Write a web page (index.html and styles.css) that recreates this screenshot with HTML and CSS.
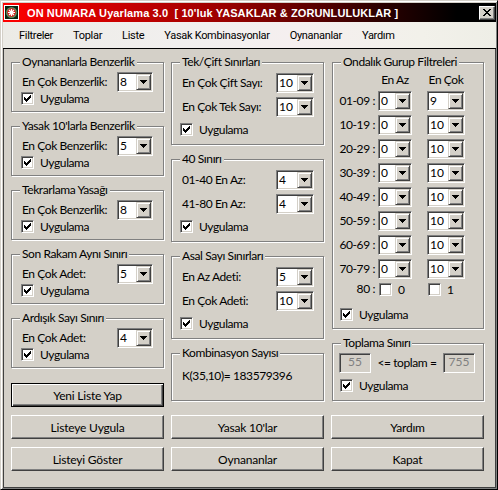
FILE: index.html
```html
<!DOCTYPE html>
<html lang="tr">
<head>
<meta charset="utf-8">
<title>ON NUMARA Uyarlama 3.0</title>
<link rel="stylesheet" href="styles.css">
</head>
<body>
<svg class="defs" width="0" height="0" aria-hidden="true">
  <symbol id="tick" viewBox="0 0 7 7">
    <path d="M0 2h1v3H0zM1 3h1v3H1zM2 4h1v3H2zM3 3h1v3H3zM4 2h1v3H4zM5 1h1v3H5zM6 0h1v3H6z"/>
  </symbol>
  <symbol id="arrow" viewBox="0 0 7 4">
    <path d="M0 0h7v1H0zM1 1h5v1H1zM2 2h3v1H2zM3 3h1v1H3z"/>
  </symbol>
</svg>

<div class="window">
  <header class="titlebar">
    <svg class="app-icon" viewBox="0 0 15 15" aria-hidden="true">
      <rect x="0.5" y="0.5" width="14" height="14" fill="#0b2410" stroke="#fff"/>
      <circle cx="7.5" cy="7.5" r="5.5" fill="#5f8f63"/>
      <circle cx="7.5" cy="7.5" r="4.2" fill="#d81818"/>
      <path d="M7.5 4v7M4 7.5h7M5 5l5 5M10 5l-5 5" stroke="#fff" stroke-width="1.2"/>
    </svg>
    <span class="title">ON NUMARA Uyarlama 3.0&nbsp; [ 10'luk YASAKLAR &amp; ZORUNLULUKLAR ]</span>
    <span class="close">
      <svg viewBox="0 0 8 7" aria-hidden="true"><path d="M0 0h2v1H0zM6 0h2v1H6zM1 1h2v1H1zM5 1h2v1H5zM2 2h4v1H2zM3 3h2v1H3zM2 4h4v1H2zM1 5h2v1H1zM5 5h2v1H5zM0 6h2v1H0zM6 6h2v1H6z"/></svg>
    </span>
  </header>

  <nav class="menubar">
    <span>Filtreler</span>
    <span>Toplar</span>
    <span>Liste</span>
    <span>Yasak Kombinasyonlar</span>
    <span>Oynananlar</span>
    <span>Yardım</span>
  </nav>

  <main class="client">
    <!-- left column -->
    <div class="col">
      <section class="group compact">
        <span class="caption">Oynananlarla Benzerlik</span>
        <div class="field"><span class="lbl">En Çok Benzerlik:</span>
          <span class="combo w36"><span class="val">8</span><span class="drop"><svg><use href="#arrow"/></svg></span></span></div>
        <div class="check"><span class="box"><svg><use href="#tick"/></svg></span>Uygulama</div>
      </section>
      <section class="group compact">
        <span class="caption">Yasak 10'larla Benzerlik</span>
        <div class="field"><span class="lbl">En Çok Benzerlik:</span>
          <span class="combo w36"><span class="val">5</span><span class="drop"><svg><use href="#arrow"/></svg></span></span></div>
        <div class="check"><span class="box"><svg><use href="#tick"/></svg></span>Uygulama</div>
      </section>
      <section class="group compact">
        <span class="caption">Tekrarlama Yasağı</span>
        <div class="field"><span class="lbl">En Çok Benzerlik:</span>
          <span class="combo w36"><span class="val">8</span><span class="drop"><svg><use href="#arrow"/></svg></span></span></div>
        <div class="check"><span class="box"><svg><use href="#tick"/></svg></span>Uygulama</div>
      </section>
      <section class="group compact">
        <span class="caption">Son Rakam Aynı Sınırı</span>
        <div class="field"><span class="lbl">En Çok Adet:</span>
          <span class="combo w36"><span class="val">5</span><span class="drop"><svg><use href="#arrow"/></svg></span></span></div>
        <div class="check"><span class="box"><svg><use href="#tick"/></svg></span>Uygulama</div>
      </section>
      <section class="group compact">
        <span class="caption">Ardışık Sayı Sınırı</span>
        <div class="field"><span class="lbl">En Çok Adet:</span>
          <span class="combo w36"><span class="val">4</span><span class="drop"><svg><use href="#arrow"/></svg></span></span></div>
        <div class="check"><span class="box"><svg><use href="#tick"/></svg></span>Uygulama</div>
      </section>
      <button class="btn default new-list" type="button">Yeni Liste Yap</button>
    </div>

    <!-- middle column -->
    <div class="col">
      <section class="group pair">
        <span class="caption">Tek/Çift Sınırları</span>
        <div class="field"><span class="lbl">En Çok Çift Sayı:</span>
          <span class="combo w38"><span class="val">10</span><span class="drop"><svg><use href="#arrow"/></svg></span></span></div>
        <div class="field"><span class="lbl">En Çok Tek Sayı:</span>
          <span class="combo w38"><span class="val">10</span><span class="drop"><svg><use href="#arrow"/></svg></span></span></div>
        <div class="check"><span class="box"><svg><use href="#tick"/></svg></span>Uygulama</div>
      </section>
      <section class="group pair">
        <span class="caption">40 Sınırı</span>
        <div class="field"><span class="lbl">01-40 En Az:</span>
          <span class="combo w38"><span class="val">4</span><span class="drop"><svg><use href="#arrow"/></svg></span></span></div>
        <div class="field"><span class="lbl">41-80 En Az:</span>
          <span class="combo w38"><span class="val">4</span><span class="drop"><svg><use href="#arrow"/></svg></span></span></div>
        <div class="check"><span class="box"><svg><use href="#tick"/></svg></span>Uygulama</div>
      </section>
      <section class="group pair">
        <span class="caption">Asal Sayı Sınırları</span>
        <div class="field"><span class="lbl">En Az Adeti:</span>
          <span class="combo w38"><span class="val">5</span><span class="drop"><svg><use href="#arrow"/></svg></span></span></div>
        <div class="field"><span class="lbl">En Çok Adeti:</span>
          <span class="combo w38"><span class="val">10</span><span class="drop"><svg><use href="#arrow"/></svg></span></span></div>
        <div class="check"><span class="box"><svg><use href="#tick"/></svg></span>Uygulama</div>
      </section>
      <section class="group combos">
        <span class="caption">Kombinasyon Sayısı</span>
        <div class="count">K(35,10)= 183579396</div>
      </section>
    </div>

    <!-- right column -->
    <div class="col">
      <section class="group decades">
        <span class="caption">Ondalık Gurup Filtreleri</span>
        <div class="dhead"><span class="c1">En Az</span><span class="c2">En Çok</span></div>
        <div class="drow"><span class="dl">01-09 :</span>
          <span class="combo w34 c1"><span class="val">0</span><span class="drop"><svg><use href="#arrow"/></svg></span></span>
          <span class="combo w38 c2"><span class="val">9</span><span class="drop"><svg><use href="#arrow"/></svg></span></span></div>
        <div class="drow"><span class="dl">10-19 :</span>
          <span class="combo w34 c1"><span class="val">0</span><span class="drop"><svg><use href="#arrow"/></svg></span></span>
          <span class="combo w38 c2"><span class="val">10</span><span class="drop"><svg><use href="#arrow"/></svg></span></span></div>
        <div class="drow"><span class="dl">20-29 :</span>
          <span class="combo w34 c1"><span class="val">0</span><span class="drop"><svg><use href="#arrow"/></svg></span></span>
          <span class="combo w38 c2"><span class="val">10</span><span class="drop"><svg><use href="#arrow"/></svg></span></span></div>
        <div class="drow"><span class="dl">30-39 :</span>
          <span class="combo w34 c1"><span class="val">0</span><span class="drop"><svg><use href="#arrow"/></svg></span></span>
          <span class="combo w38 c2"><span class="val">10</span><span class="drop"><svg><use href="#arrow"/></svg></span></span></div>
        <div class="drow"><span class="dl">40-49 :</span>
          <span class="combo w34 c1"><span class="val">0</span><span class="drop"><svg><use href="#arrow"/></svg></span></span>
          <span class="combo w38 c2"><span class="val">10</span><span class="drop"><svg><use href="#arrow"/></svg></span></span></div>
        <div class="drow"><span class="dl">50-59 :</span>
          <span class="combo w34 c1"><span class="val">0</span><span class="drop"><svg><use href="#arrow"/></svg></span></span>
          <span class="combo w38 c2"><span class="val">10</span><span class="drop"><svg><use href="#arrow"/></svg></span></span></div>
        <div class="drow"><span class="dl">60-69 :</span>
          <span class="combo w34 c1"><span class="val">0</span><span class="drop"><svg><use href="#arrow"/></svg></span></span>
          <span class="combo w38 c2"><span class="val">10</span><span class="drop"><svg><use href="#arrow"/></svg></span></span></div>
        <div class="drow"><span class="dl">70-79 :</span>
          <span class="combo w34 c1"><span class="val">0</span><span class="drop"><svg><use href="#arrow"/></svg></span></span>
          <span class="combo w38 c2"><span class="val">10</span><span class="drop"><svg><use href="#arrow"/></svg></span></span></div>
        <div class="drow last"><span class="dl">80 :</span>
          <span class="opt c1"><span class="box"></span>0</span>
          <span class="opt c2"><span class="box"></span>1</span></div>
        <div class="check"><span class="box"><svg><use href="#tick"/></svg></span>Uygulama</div>
      </section>
      <section class="group sum">
        <span class="caption">Toplama Sınırı</span>
        <div class="sumrow"><span class="edit">55</span><span>&lt;= toplam =</span><span class="edit">755</span></div>
        <div class="check"><span class="box"><svg><use href="#tick"/></svg></span>Uygulama</div>
      </section>
    </div>

    <button class="btn" type="button">Listeye Uygula</button>
    <button class="btn" type="button">Yasak 10'lar</button>
    <button class="btn" type="button">Yardım</button>
    <button class="btn" type="button">Listeyi Göster</button>
    <button class="btn" type="button">Oynananlar</button>
    <button class="btn" type="button">Kapat</button>
  </main>
</div>
</body>
</html>
```

FILE: styles.css
```css
* { box-sizing: border-box; }

html, body { margin: 0; padding: 0; }

body {
  width: 498px;
  height: 490px;
  overflow: hidden;
  background: #d4d0c8;
  color: #000;
  font-family: Lato, "Liberation Sans", sans-serif;
  font-size: 12px;
  letter-spacing: -0.4px;
}

.defs { position: absolute; width: 0; height: 0; overflow: hidden; }

svg { fill: currentColor; shape-rendering: crispEdges; }

/* window frame */
.window {
  width: 498px;
  height: 490px;
  display: flex;
  flex-direction: column;
  padding: 2px 1px 1px 2px;
  background: #d4d0c8;
  border: 1px solid;
  border-color: #d4d0c8 #000 #000 #d4d0c8;
  box-shadow: inset 1px 1px 0 #fff, inset -1px -1px 0 #808080;
}

/* caption bar */
.titlebar {
  flex: none;
  height: 19px;
  display: flex;
  align-items: center;
  color: #fff;
  background: linear-gradient(to right, #ff0000 0%, #9a0000 45%, #300000 75%, #000 92%);
}

.app-icon {
  width: 15px;
  height: 15px;
  margin-left: 1px;
  flex: none;
  shape-rendering: auto;
}

.title {
  flex: 1;
  margin-left: 8px;
  font: bold 11px "Liberation Sans", Arial, sans-serif;
  letter-spacing: 0.1px;
  white-space: pre;
}

.close {
  flex: none;
  width: 16px;
  height: 14px;
  margin-right: 1px;
  display: flex;
  align-items: center;
  justify-content: center;
  color: #000;
  background: #d4d0c8;
  border: 1px solid;
  border-color: #fff #404040 #404040 #fff;
  box-shadow: inset -1px -1px 0 #808080;
}

.close svg { width: 8px; height: 7px; }

/* menu */
.menubar {
  flex: none;
  height: 27px;
  display: flex;
  align-items: center;
  padding-left: 6px;
  background: linear-gradient(to right, #ecebe6 0%, #f1efee 35%, #f5efef 60%, #f2f1ea 85%, #eeeee6 100%);
  border-bottom: 1px solid #000;
  font: 11px Roboto, "Liberation Sans", sans-serif;
  letter-spacing: -0.3px;
}

.menubar span { padding: 0 10px; }

/* dialog body */
.client {
  flex: 1;
  display: grid;
  grid-template-columns: repeat(3, 153px);
  column-gap: 7px;
  row-gap: 8px;
  align-content: start;
  align-items: start;
  padding: 13px 0 0 7px;
  border: 1px solid #404040;
  border-top: 0;
}

.col { display: flex; flex-direction: column; }

/* etched group box */
.group {
  position: relative;
  border: 1px solid #808080;
  box-shadow: inset 1px 1px 0 #fff, 1px 1px 0 #fff;
}

.col > .group + .group { margin-top: 14px; }

.caption {
  position: absolute;
  top: -8px;
  left: 8px;
  padding: 0 2px;
  line-height: 14px;
  background: #d4d0c8;
  white-space: nowrap;
}

.field {
  height: 20px;
  display: flex;
  align-items: center;
  justify-content: space-between;
}

.lbl { padding-bottom: 2px; }

.check {
  height: 13px;
  display: flex;
  align-items: center;
  gap: 6px;
}

/* check box */
.box {
  flex: none;
  width: 13px;
  height: 13px;
  display: flex;
  align-items: center;
  justify-content: center;
  background: #fff;
  border: 1px solid;
  border-color: #808080 #fff #fff #808080;
  box-shadow: inset 1px 1px 0 #404040, inset -1px -1px 0 #d4d0c8;
}

.box svg { width: 7px; height: 7px; }

/* combo box */
.combo {
  flex: none;
  height: 20px;
  display: flex;
  padding: 1px;
  background: #fff;
  border: 1px solid;
  border-color: #808080 #fff #fff #808080;
  box-shadow: inset 1px 1px 0 #404040, inset -1px -1px 0 #d4d0c8;
}

.w34 { width: 34px; }
.w36 { width: 36px; }
.w38 { width: 38px; }

.val {
  flex: 1;
  padding-left: 1px;
  line-height: 16px;
  letter-spacing: 0;
}

.drop {
  flex: none;
  width: 15px;
  display: flex;
  align-items: center;
  justify-content: center;
  background: #d4d0c8;
  border: 1px solid;
  border-color: #d4d0c8 #404040 #404040 #d4d0c8;
  box-shadow: inset 1px 1px 0 #fff, inset -1px -1px 0 #808080;
}

.drop svg { width: 7px; height: 4px; }

/* left column groups */
.compact { padding: 9px 10px 6px 9px; }
.compact .lbl { margin-left: 1px; }

/* middle column groups */
.pair { padding: 10px 9px 8px 8px; }
.pair .lbl { margin-left: 2px; }
.pair .field + .field { margin-top: 4px; }
.pair .check { margin-top: 6px; }

.combos { padding: 15px 10px 17px 10px; }
.count { line-height: 14px; }

/* decade filters */
.decades { margin-left: 1px; padding: 10px 0 7px 0; }

.dhead {
  height: 14px;
  line-height: 14px;
  display: flex;
  padding-left: 45px;
  margin-bottom: 4px;
}

.dhead .c1 { width: 34px; text-align: center; }
.dhead .c2 { width: 38px; margin-left: 15px; text-align: center; }

.drow {
  height: 20px;
  display: flex;
  align-items: center;
}

.drow + .drow { margin-top: 4px; }

.dl {
  width: 42px;
  text-align: right;
  padding-bottom: 2px;
}

.drow .c1 { margin-left: 3px; }
.drow .c2 { margin-left: 15px; }

.drow.last { height: 13px; }

.opt {
  display: flex;
  align-items: center;
  gap: 6px;
  padding-left: 1px;
}

.opt.c1 { width: 34px; }

.decades .check { margin: 12px 0 0 7px; }

/* sum limit */
.sum { margin-left: 1px; padding: 9px 8px 8px 6px; }

.sumrow {
  height: 20px;
  display: flex;
  align-items: center;
  justify-content: space-between;
  margin-bottom: 6px;
}

.sumrow > span:nth-child(2) { padding-bottom: 2px; }

.edit {
  width: 32px;
  height: 20px;
  line-height: 16px;
  text-align: center;
  letter-spacing: 0;
  color: #808080;
  background: #d4d0c8;
  border: 1px solid;
  border-color: #808080 #fff #fff #808080;
  box-shadow: inset 1px 1px 0 #404040, inset -1px -1px 0 #d4d0c8;
}

.sum .check { margin-left: 1px; }

/* push buttons */
.btn {
  height: 24px;
  margin: 0;
  padding: 0;
  font: inherit;
  letter-spacing: -0.2px;
  color: #000;
  background: #d4d0c8;
  border: 1px solid;
  border-color: #fff #404040 #404040 #fff;
  box-shadow: inset -1px -1px 0 #808080;
}

.btn.default {
  border-color: #000;
  box-shadow: inset 1px 1px 0 #fff, inset -1px -1px 0 #404040, inset -2px -2px 0 #808080;
}

.new-list { margin-top: 15px; }
```
